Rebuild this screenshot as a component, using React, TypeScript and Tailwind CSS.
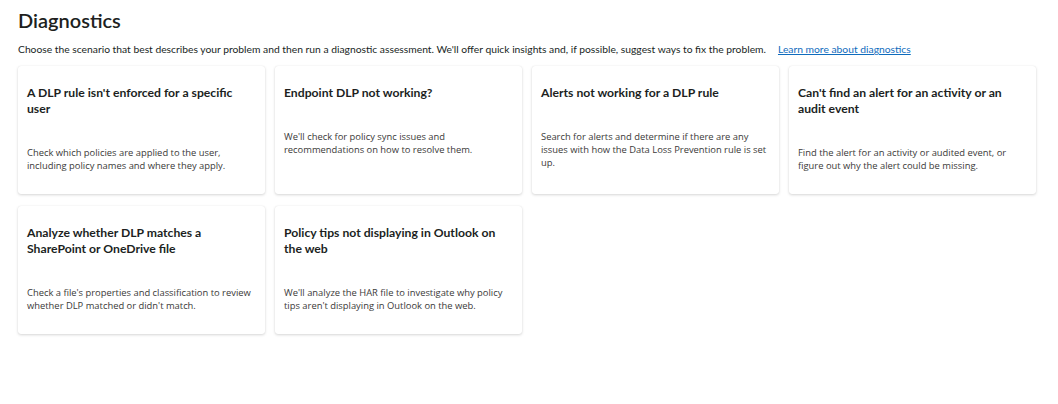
const cards = [
  {
    title: "A DLP rule isn't enforced for a specific user",
    desc: 'Check which policies are applied to the user, including policy names and where they apply.',
  },
  {
    title: 'Endpoint DLP not working?',
    desc: "We'll check for policy sync issues and recommendations on how to resolve them.",
  },
  {
    title: 'Alerts not working for a DLP rule',
    desc: 'Search for alerts and determine if there are any issues with how the Data Loss Prevention rule is set up.',
  },
  {
    title: "Can't find an alert for an activity or an audit event",
    desc: 'Find the alert for an activity or audited event, or figure out why the alert could be missing.',
  },
  {
    title: 'Analyze whether DLP matches a SharePoint or OneDrive file',
    desc: "Check a file's properties and classification to review whether DLP matched or didn't match.",
  },
  {
    title: 'Policy tips not displaying in Outlook on the web',
    desc: "We'll analyze the HAR file to investigate why policy tips aren't displaying in Outlook on the web.",
  },
];

export default function App() {
  return (
    <div className="min-h-[404px] bg-white pl-[18px] pt-[6px] font-['Segoe_UI','Lato',sans-serif] text-[#201f1e]">
      <h1 className="text-[20px] font-semibold leading-[28px]">Diagnostics</h1>

      <p className="mt-[8px] text-[10.3px] leading-[14px] text-[#201f1e]">
        Choose the scenario that best describes your problem and then run a diagnostic assessment. We'll offer quick
        insights and, if possible, suggest ways to fix the problem.
        <a href="#" className="ml-[12px] text-[#0f6cbd] underline">
          Learn more about diagnostics
        </a>
      </p>

      {/* Scenario cards */}
      <div className="mt-[10px] grid w-[1018px] grid-cols-4 gap-x-[10px] gap-y-[12px]">
        {cards.map((card, i) => (
          <div
            key={i}
            className="h-[128px] rounded-[3px] bg-white pl-[9px] pr-[8px] pt-[19px] shadow-[0_1px_3px_rgba(0,0,0,0.16),0_0_1px_rgba(0,0,0,0.1)]"
          >
            <h3 className="text-[12.2px] font-bold leading-[16px] text-[#201f1e]">{card.title}</h3>
            <p className="mt-[29px] font-['Open_Sans',sans-serif] text-[9.4px] leading-[13px] text-[#3b3a39]">
              {card.desc}
            </p>
          </div>
        ))}
      </div>
    </div>
  );
}
